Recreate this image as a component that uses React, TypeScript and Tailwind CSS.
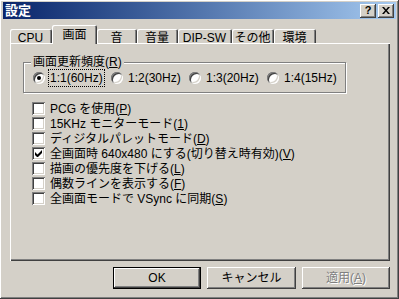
import React from "react";

const raised =
  "shadow-[inset_-1px_-1px_#404040,inset_1px_1px_#ffffff,inset_-2px_-2px_#808080,inset_2px_2px_#d4d0c8]";
const sunken =
  "shadow-[inset_1px_1px_#808080,inset_-1px_-1px_#ffffff,inset_2px_2px_#404040,inset_-2px_-2px_#d4d0c8]";

const tabs = [
  { label: "CPU", w: "w-[42px]" },
  { label: "画面", w: "w-[45px]", active: true },
  { label: "音", w: "w-[40px]" },
  { label: "音量", w: "w-[41px]" },
  { label: "DIP-SW", w: "w-[54px]" },
  { label: "その他", w: "w-[42px]" },
  { label: "環境", w: "w-[42px]" },
];

const rates = [
  { text: "1:1(60Hz)", checked: true },
  { text: "1:2(30Hz)" },
  { text: "1:3(20Hz)" },
  { text: "1:4(15Hz)" },
];

const options = [
  { text: "PCG を使用(", key: "P" },
  { text: "15KHz モニターモード(", key: "1" },
  { text: "ディジタルパレットモード(", key: "D" },
  { text: "全画面時 640x480 にする(切り替え時有効)(", key: "V", checked: true },
  { text: "描画の優先度を下げる(", key: "L" },
  { text: "偶数ラインを表示する(", key: "F" },
  { text: "全画面モードで VSync に同期(", key: "S" },
];

export default function App() {
  return (
    <div
      className={`w-[399px] h-[299px] bg-[#d4d0c8] p-[3px] flex flex-col text-[12px] text-black leading-none ${raised}`}
      style={{ fontFamily: '"Liberation Sans", "Noto Sans CJK JP", sans-serif' }}
    >
      {/* title bar */}
      <div className="h-[17px] -mt-px flex items-center justify-between bg-gradient-to-r from-[#0a246a] to-[#a6caf0] pl-[2px] pr-[2px]">
        <span className="text-white font-bold text-[13px]">設定</span>
        <div className="flex gap-[2px]">
          <TitleButton>
            <span className="font-bold text-[11px] leading-none">?</span>
          </TitleButton>
          <TitleButton>
            <svg width="8" height="7" viewBox="0 0 8 7">
              <path d="M0 0h2l2 2.5L6 0h2L5 3.5 8 7H6L4 4.5 2 7H0l3-3.5z" fill="#000" />
            </svg>
          </TitleButton>
        </div>
      </div>

      {/* tabs */}
      <div className="mt-[6px] ml-[7px] h-[18px] flex items-end">
        {tabs.map((t) =>
          t.active ? (
            <div
              key={t.label}
              className={`${t.w} h-[19px] -mb-px relative z-10 bg-[#d4d0c8] rounded-t-[2px] flex justify-center pt-[4px] shadow-[inset_1px_1px_#ffffff,inset_-1px_0_#404040,inset_-2px_0_#808080]`}
            >
              {t.label}
            </div>
          ) : (
            <div
              key={t.label}
              className={`${t.w} h-[14px] rounded-t-[2px] flex justify-center pr-px pt-[3px] whitespace-nowrap shadow-[inset_1px_1px_#ffffff,inset_-1px_0_#404040,inset_-2px_0_#808080]`}
            >
              {t.label}
            </div>
          )
        )}
      </div>

      {/* tab panel */}
      <div className="ml-[7px] w-[380px] h-[218px] flex flex-col shadow-[inset_1px_1px_#ffffff,inset_-1px_-1px_#404040,inset_-2px_-2px_#808080]">
        <div className="relative ml-[13px] mt-[19px] w-[323px] h-[31px] border border-[#808080] shadow-[1px_1px_#ffffff,inset_1px_1px_#ffffff] flex items-center pl-[9px]">
          <span className="absolute -top-[7px] left-[7px] bg-[#d4d0c8] px-[2px]">
            画面更新頻度(<u>R</u>)
          </span>
          {rates.map((r) => (
            <div key={r.text} className="w-[79px] flex items-center gap-[3px]">
              <div className={`w-[12px] h-[12px] rounded-full bg-white flex items-center justify-center ${sunken}`}>
                {r.checked && <div className="w-[4px] h-[4px] rounded-full bg-black" />}
              </div>
              <span
                className={
                  r.checked
                    ? "border border-dotted border-black px-px py-[2px]"
                    : "border border-transparent px-px py-[2px]"
                }
              >
                {r.text}
              </span>
            </div>
          ))}
        </div>

        <div className="ml-[22px] mt-[8px] flex flex-col">
          {options.map((o) => (
            <div key={o.key} className="h-[15px] flex items-center gap-[5px]">
              <div className={`w-[13px] h-[13px] bg-white flex items-center justify-center ${sunken}`}>
                {o.checked && (
                  <svg width="7" height="7" viewBox="0 0 7 7">
                    <path d="M0 2v3l2 2h1l4-4V0L2.5 4.5z" fill="#000" />
                  </svg>
                )}
              </div>
              <span>
                {o.text}
                <u>{o.key}</u>)
              </span>
            </div>
          ))}
        </div>
      </div>

      {/* buttons */}
      <div className="mt-[6px] ml-[110px] flex gap-[6px]">
        <div className="w-[88px] h-[22px] border border-black">
          <div className={`w-full h-full flex items-center justify-center ${raised}`}>OK</div>
        </div>
        <div className={`w-[89px] h-[22px] flex items-center justify-center ${raised}`}>キャンセル</div>
        <div className={`w-[88px] h-[22px] flex items-center justify-center text-[#808080] [text-shadow:1px_1px_#ffffff] ${raised}`}>
          適用(<u>A</u>)
        </div>
      </div>
    </div>
  );
}

function TitleButton({ children }: { children: React.ReactNode }) {
  return (
    <div className={`w-[16px] h-[14px] bg-[#d4d0c8] flex items-center justify-center ${raised}`}>
      {children}
    </div>
  );
}
